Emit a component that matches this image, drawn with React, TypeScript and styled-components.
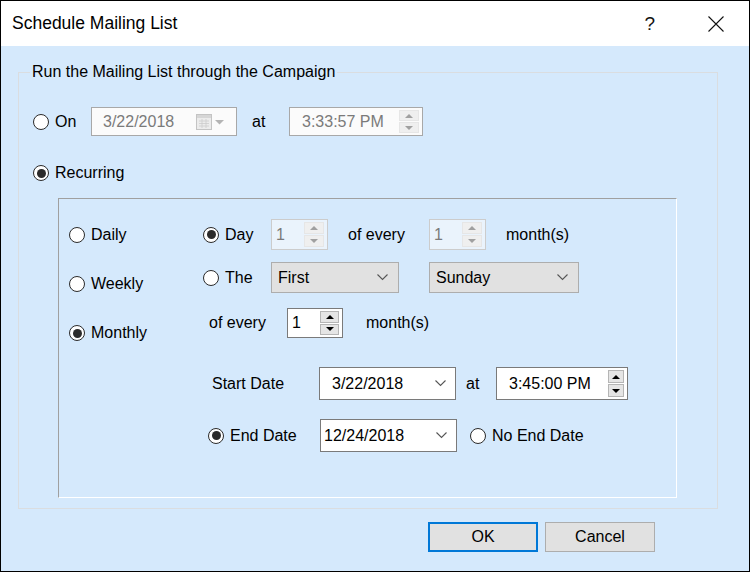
import styled, { createGlobalStyle } from 'styled-components'

const GlobalStyle = createGlobalStyle`
  html, body {
    margin: 0;
    padding: 0;
    background: #ffffff;
  }
  body {
    font-family: "Liberation Sans", Arial, sans-serif;
    color: #000000;
  }
`

const Window = styled.div`
  width: 750px;
  height: 572px;
  box-sizing: border-box;
  border: 1px solid #000000;
  display: flex;
  flex-direction: column;
  overflow: hidden;
`

const TitleBar = styled.div`
  height: 45px;
  flex: none;
  background: #ffffff;
  display: flex;
  align-items: center;
  padding: 0 25px 0 11px;
`

const Title = styled.div`
  font-size: 17.5px;
  flex: 1;
`

const HelpGlyph = styled.span`
  font-size: 19px;
  font-weight: 300;
  color: #111;
  margin-right: 53px;
`

const Body = styled.div`
  flex: 1;
  background: #d5e9fc;
  padding: 26px 31px 0 17px;
  display: flex;
  flex-direction: column;
`

const GroupBox = styled.div`
  position: relative;
  height: 437px;
  box-sizing: border-box;
  border: 1px solid #dadde0;
  padding: 34px 0 0 14px;
`

const Legend = styled.span`
  position: absolute;
  top: -10px;
  left: 11px;
  padding: 0 2px;
  background: #d5e9fc;
  font-size: 16px;
  line-height: 18px;
`

const Row = styled.div<{ $h: number; $mt?: number }>`
  display: flex;
  align-items: center;
  height: ${({ $h }) => $h}px;
  margin-top: ${({ $mt }) => $mt || 0}px;
`

const RadioLabel = styled.label<{ $w?: number; $pl?: number; $ml?: number }>`
  display: flex;
  align-items: center;
  gap: 6px;
  font-size: 16px;
  box-sizing: border-box;
  width: ${({ $w }) => ($w ? `${$w}px` : 'auto')};
  padding-left: ${({ $pl }) => $pl || 0}px;
  margin-left: ${({ $ml }) => $ml || 0}px;
  flex: none;
`

const RadioCircle = styled.span<{ $checked?: boolean }>`
  width: 16px;
  height: 16px;
  box-sizing: border-box;
  border-radius: 50%;
  border: 1px solid #2b2b2b;
  background: #ffffff;
  display: inline-flex;
  align-items: center;
  justify-content: center;
  flex: none;

  &::after {
    content: '';
    width: 9px;
    height: 9px;
    border-radius: 50%;
    background: ${({ $checked }) => ($checked ? '#2b2b2b' : 'transparent')};
  }
`

const Text = styled.span<{ $w?: number; $pl?: number; $ml?: number }>`
  font-size: 16px;
  box-sizing: border-box;
  flex: none;
  width: ${({ $w }) => ($w ? `${$w}px` : 'auto')};
  padding-left: ${({ $pl }) => $pl || 0}px;
  margin-left: ${({ $ml }) => $ml || 0}px;
`

const Field = styled.div<{ $w: number; $h: number; $tone: 'disabled' | 'white' | 'grey' | 'faded'; $ml?: number }>`
  flex: none;
  width: ${({ $w }) => $w}px;
  height: ${({ $h }) => $h}px;
  margin-left: ${({ $ml }) => $ml || 0}px;
  box-sizing: border-box;
  display: flex;
  align-items: center;
  font-size: 16px;
  border: 1px solid
    ${({ $tone }) =>
      $tone === 'white' ? '#7a7a7a' : $tone === 'grey' ? '#adadad' : $tone === 'faded' ? '#cccccc' : '#a8a8a8'};
  background: ${({ $tone }) =>
    $tone === 'white' ? '#ffffff' : $tone === 'grey' ? '#e1e1e1' : $tone === 'faded' ? '#eaf3fc' : '#fbfbfb'};
  color: ${({ $tone }) => ($tone === 'disabled' || $tone === 'faded' ? '#7a7a7a' : '#000000')};
`

const FieldText = styled.span<{ $pl: number }>`
  flex: 1;
  padding-left: ${({ $pl }) => $pl}px;
  white-space: nowrap;
`

const ChevronWrap = styled.span<{ $mr: number }>`
  display: inline-flex;
  margin-right: ${({ $mr }) => $mr}px;
`

const Spinner = styled.div<{ $w: number }>`
  align-self: stretch;
  width: ${({ $w }) => $w}px;
  margin: 2px 3px 2px 0;
  display: flex;
  flex-direction: column;
  gap: 1px;
`

const SpinButton = styled.div<{ $enabled?: boolean }>`
  flex: 1;
  display: flex;
  align-items: center;
  justify-content: center;
  background: ${({ $enabled }) => ($enabled ? '#e5e5e5' : '#efefef')};
  border: 1px solid ${({ $enabled }) => ($enabled ? '#b5b5b5' : '#e6e6e6')};
`

const Arrow = styled.span<{ $up?: boolean; $enabled?: boolean }>`
  width: 0;
  height: 0;
  border-left: 4px solid transparent;
  border-right: 4px solid transparent;
  ${({ $up, $enabled }) =>
    $up
      ? `border-bottom: 4px solid ${$enabled ? '#000' : '#a0a0a0'};`
      : `border-top: 4px solid ${$enabled ? '#000' : '#a0a0a0'};`}
`

const InnerPanel = styled.div`
  margin: 15px 0 0 25px;
  width: 619px;
  height: 300px;
  box-sizing: border-box;
  border-top: 1px solid #a0a0a0;
  border-left: 1px solid #a0a0a0;
  border-right: 1px solid #ffffff;
  border-bottom: 1px solid #ffffff;
  display: flex;
`

const LeftCol = styled.div`
  width: 144px;
  box-sizing: border-box;
  padding: 26px 0 0 10px;
  display: flex;
  flex-direction: column;
  gap: 29px;
`

const RightCol = styled.div`
  flex: 1;
  padding-top: 20px;
  display: flex;
  flex-direction: column;
`

const ButtonRow = styled.div`
  display: flex;
  justify-content: flex-end;
  gap: 7px;
  margin: 13px 63px 0 0;
`

const Button = styled.button<{ $default?: boolean }>`
  width: 110px;
  height: 30px;
  box-sizing: border-box;
  font-family: "Liberation Sans", Arial, sans-serif;
  font-size: 16px;
  color: #000;
  background: #e1e1e1;
  border: ${({ $default }) => ($default ? '2px solid #0078d7' : '1px solid #adadad')};
  padding: 0;
`

function Chevron() {
  return (
    <svg width="11" height="7" viewBox="0 0 11 7">
      <path d="M0.5 0.5 L5.5 5.5 L10.5 0.5" fill="none" stroke="#555" strokeWidth="1.1" />
    </svg>
  )
}

function CloseIcon() {
  return (
    <svg width="16" height="16" viewBox="0 0 16 16">
      <path d="M0.5 0.5 L15.5 15.5 M15.5 0.5 L0.5 15.5" stroke="#111" strokeWidth="1.1" />
    </svg>
  )
}

function CalendarIcon() {
  return (
    <svg width="32" height="18" viewBox="0 0 32 18" style={{ marginRight: 8 }}>
      <rect x="0.5" y="1.5" width="15" height="15" fill="#ececec" stroke="#c4c4c4" />
      <rect x="1" y="2" width="14" height="3" fill="#d6d6d6" />
      <path d="M3 8h10M3 10.5h10M3 13h10M6 6v9M10 6v9" stroke="#cdcdcd" strokeWidth="0.8" />
      <path d="M19 7 L28 7 L23.5 11.5 Z" fill="#b4b4b4" />
    </svg>
  )
}

function Radio({ label, checked, ...rest }: { label: string; checked?: boolean; $w?: number; $pl?: number; $ml?: number }) {
  return (
    <RadioLabel {...rest}>
      <RadioCircle $checked={checked} />
      {label}
    </RadioLabel>
  )
}

function Spin({
  value,
  w,
  h,
  tone,
  enabled,
  pl,
  spinW = 20,
}: {
  value: string
  w: number
  h: number
  tone: 'disabled' | 'white' | 'faded'
  enabled?: boolean
  pl: number
  spinW?: number
}) {
  return (
    <Field $w={w} $h={h} $tone={tone}>
      <FieldText $pl={pl}>{value}</FieldText>
      <Spinner $w={spinW}>
        <SpinButton $enabled={enabled}>
          <Arrow $up $enabled={enabled} />
        </SpinButton>
        <SpinButton $enabled={enabled}>
          <Arrow $enabled={enabled} />
        </SpinButton>
      </Spinner>
    </Field>
  )
}

function Combo({ value, w, h, tone, pl, ml, mr }: { value: string; w: number; h: number; tone: 'white' | 'grey'; pl: number; ml?: number; mr: number }) {
  return (
    <Field $w={w} $h={h} $tone={tone} $ml={ml}>
      <FieldText $pl={pl}>{value}</FieldText>
      <ChevronWrap $mr={mr}>
        <Chevron />
      </ChevronWrap>
    </Field>
  )
}

export default function App() {
  return (
    <>
      <GlobalStyle />
      <Window>
        <TitleBar>
          <Title>Schedule Mailing List</Title>
          <HelpGlyph>?</HelpGlyph>
          <CloseIcon />
        </TitleBar>

        <Body>
          <GroupBox>
            <Legend>Run the Mailing List through the Campaign</Legend>

            <Row $h={29}>
              <Radio label="On" $w={58} />
              <Field $w={146} $h={29} $tone="disabled">
                <FieldText $pl={11}>3/22/2018</FieldText>
                <CalendarIcon />
              </Field>
              <Text $w={52} $pl={15}>at</Text>
              <Spin value="3:33:57 PM" w={134} h={29} tone="disabled" pl={12} />
            </Row>

            <Row $h={20} $mt={27}>
              <Radio label="Recurring" checked />
            </Row>

            <InnerPanel>
              <LeftCol>
                <Row $h={20}>
                  <Radio label="Daily" />
                </Row>
                <Row $h={20}>
                  <Radio label="Weekly" />
                </Row>
                <Row $h={20}>
                  <Radio label="Monthly" checked />
                </Row>
              </LeftCol>

              <RightCol>
                <Row $h={31}>
                  <Radio label="Day" checked $w={68} />
                  <Spin value="1" w={57} h={31} tone="faded" pl={4} />
                  <Text $w={101} $pl={20}>of every</Text>
                  <Spin value="1" w={57} h={31} tone="faded" pl={4} />
                  <Text $ml={20}>month(s)</Text>
                </Row>

                <Row $h={31} $mt={12}>
                  <Radio label="The" $w={68} />
                  <Combo value="First" w={128} h={31} tone="grey" pl={6} mr={10} />
                  <Combo value="Sunday" w={150} h={31} tone="grey" pl={6} ml={30} mr={10} />
                </Row>

                <Row $h={30} $mt={15}>
                  <Text $w={84} $pl={6}>of every</Text>
                  <Spin value="1" w={56} h={30} tone="white" enabled pl={4} spinW={19} />
                  <Text $ml={23}>month(s)</Text>
                </Row>

                <Row $h={33} $mt={29}>
                  <Text $w={116} $pl={9}>Start Date</Text>
                  <Combo value="3/22/2018" w={137} h={33} tone="white" pl={12} mr={9} />
                  <Text $w={40} $pl={10}>at</Text>
                  <Spin value="3:45:00 PM" w={132} h={33} tone="white" enabled pl={12} spinW={16} />
                </Row>

                <Row $h={33} $mt={19}>
                  <Radio label="End Date" checked $w={117} $pl={5} />
                  <Combo value="12/24/2018" w={137} h={33} tone="white" pl={3} mr={9} />
                  <Radio label="No End Date" $ml={13} />
                </Row>
              </RightCol>
            </InnerPanel>
          </GroupBox>

          <ButtonRow>
            <Button $default>OK</Button>
            <Button>Cancel</Button>
          </ButtonRow>
        </Body>
      </Window>
    </>
  )
}
